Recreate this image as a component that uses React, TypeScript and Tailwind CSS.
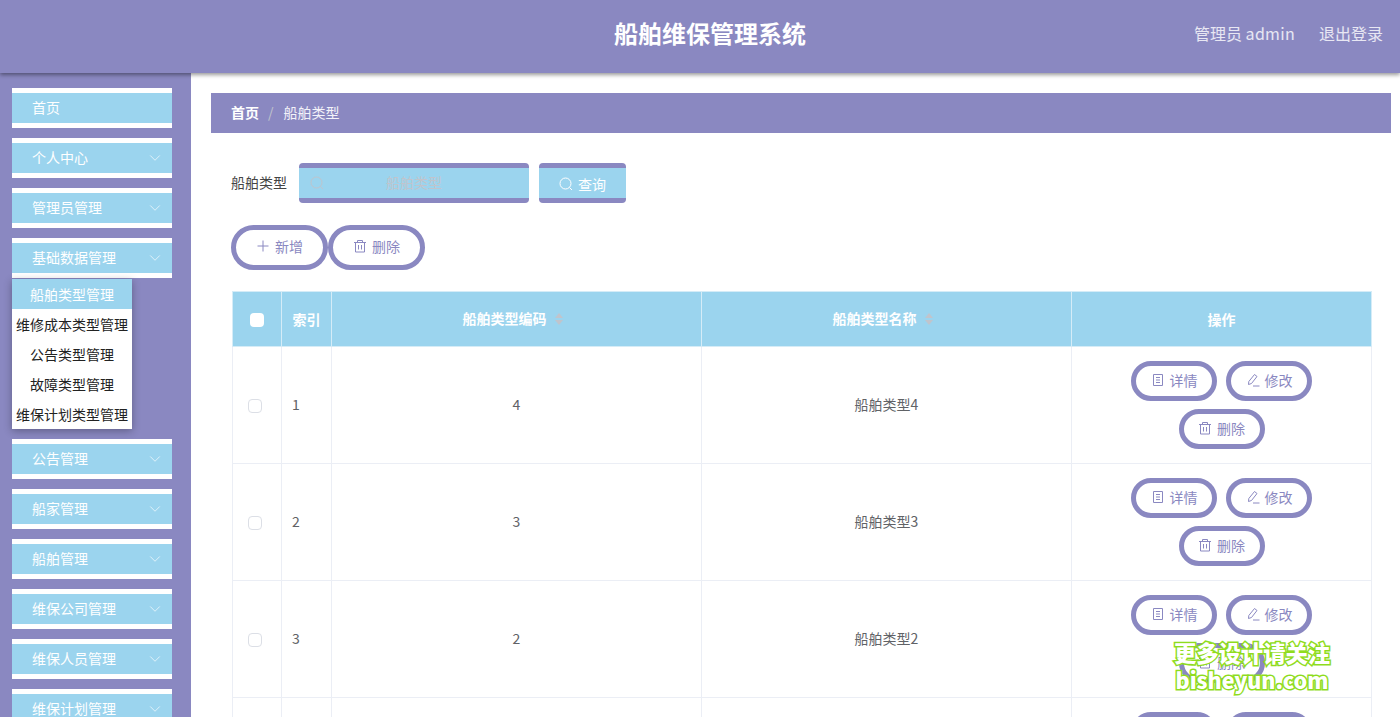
import React from "react";
import { ChevronDown } from "lucide-react";

const menus = ["个人中心", "管理员管理", "基础数据管理"];
const menusAfter = ["公告管理", "船家管理", "船舶管理", "维保公司管理", "维保人员管理", "维保计划管理", "维保记录管理"];
const subMenus = ["船舶类型管理", "维修成本类型管理", "公告类型管理", "故障类型管理", "维保计划类型管理"];
const rows = [
  { index: 1, code: "4", name: "船舶类型4" },
  { index: 2, code: "3", name: "船舶类型3" },
  { index: 3, code: "2", name: "船舶类型2" },
  { index: 4, code: "1", name: "船舶类型1" },
];

function SearchIcon({ className }: { className?: string }) {
  return (
    <svg width="14" height="14" viewBox="0 0 14 14" fill="none" stroke="currentColor" strokeWidth="1" className={className}>
      <circle cx="6.500" cy="6.500" r="5.500" />
      <path d="M10.500 10.500l2.500 2.500" />
    </svg>
  );
}

function PlusIcon() {
  return (
    <svg width="14" height="14" viewBox="0 0 14 14" fill="none" stroke="currentColor" strokeWidth="1">
      <path d="M7 1.500v11M1.500 7h11" />
    </svg>
  );
}

function TrashIcon() {
  return (
    <svg width="14" height="14" viewBox="0 0 14 14" fill="none" stroke="currentColor" strokeWidth="1">
      <path d="M1 3.500h12M4.500 3.500V1.500h5v2M2.500 3.500v9.500h9V3.500M5.500 6v4.500M8.500 6v4.500" />
    </svg>
  );
}

function TicketIcon() {
  return (
    <svg width="14" height="14" viewBox="0 0 14 14" fill="none" stroke="currentColor" strokeWidth="1">
      <path d="M2.500 1.500h9v11h-9zM5 4.500h4M5 7h4M5 9.500h4" />
    </svg>
  );
}

function EditIcon() {
  return (
    <svg width="14" height="14" viewBox="0 0 14 14" fill="none" stroke="currentColor" strokeWidth="1">
      <path d="M8.500 1.500l2.500 2-5.500 7-3 1 .3-3zM7 13h6.500" />
    </svg>
  );
}

function SortCaret() {
  return (
    <svg width="8" height="12" viewBox="0 0 8 12" fill="#c0c4cc" className="relative -top-[2px] ml-2 inline-block">
      <path d="M4 0l4 5H0zM4 12L0 7h8z" />
    </svg>
  );
}

function MenuItem({ label, arrow = true }: { label: string; arrow?: boolean }) {
  return (
    <div className="mb-[10px] flex h-10 w-40 items-center justify-between border-y-[5px] border-white bg-[#9bd4ee] pl-5 pr-[8px] text-sm text-white">
      <span className="pb-[2px]">{label}</span>
      {arrow && <ChevronDown size={18} strokeWidth={0.9} className="text-white" />}
    </div>
  );
}

function ActionButton({ icon, label }: { icon: React.ReactNode; label: string }) {
  return (
    <button className="flex h-10 w-[86px] items-center justify-center gap-[5px] rounded-full border-[5px] border-[#8a88c1] bg-white pb-[2px] text-sm text-[#8a88c1]">
      {icon}
      {label}
    </button>
  );
}

export default function App() {
  return (
    <div className="relative flex h-screen flex-col overflow-hidden bg-white font-['Noto_Sans_CJK_SC','Noto_Sans',sans-serif]">
      {/* 顶部 */}
      <header className="z-10 flex h-[73px] shrink-0 items-center bg-[#8a88c1] pr-[17px] shadow-[0_2px_4px_rgba(0,0,0,0.4)]">
        <h1 className="mb-2 ml-[614px] text-2xl font-bold text-white">船舶维保管理系统</h1>
        <div className="mb-[7px] ml-auto flex gap-6 text-base text-white/80">
          <span>
            管理员 <span className="tracking-[0.3px]">admin</span>
          </span>
          <span>退出登录</span>
        </div>
      </header>

      <div className="flex min-h-0 flex-1">
        {/* 侧边栏 */}
        <aside className="w-[191px] shrink-0 bg-[#8a88c1] pl-3 pt-[15px]">
          <MenuItem label="首页" arrow={false} />
          {menus.map((m) => (
            <MenuItem key={m} label={m} />
          ))}
          <div className="-mt-[9px] mb-[10px] w-[120px] bg-white shadow-[0_2px_8px_rgba(0,0,0,0.3)]">
            {subMenus.map((s, i) => (
              <div
                key={s}
                className={
                  i === 0
                    ? "flex h-[30px] items-center justify-center bg-[#9bd4ee] text-sm whitespace-nowrap text-white"
                    : "flex h-[30px] items-center justify-center text-sm whitespace-nowrap text-[#222]"
                }
              >
                {s}
              </div>
            ))}
          </div>
          {menusAfter.map((m) => (
            <MenuItem key={m} label={m} />
          ))}
        </aside>

        {/* 主内容 */}
        <main className="flex-1 pl-5 pr-[9px] pt-5">
          <div className="flex h-10 items-center bg-[#8a88c1] pb-[2px] pl-5 text-sm text-white/90">
            <span className="font-bold text-white">首页</span>
            <span className="ml-[9px] mr-[10px] text-[#c0c4cc]">/</span>
            <span>船舶类型</span>
          </div>

          <div className="mt-[30px] flex h-10 items-center pl-5">
            <span className="pb-[2px] text-sm text-[#444]">船舶类型</span>
            <div className="relative ml-3 h-10 w-[230px]">
              <SearchIcon className="absolute left-[11px] top-[13px] text-[#c0c4cc]" />
              <input
                placeholder="船舶类型"
                className="h-full w-full rounded border-y-[5px] border-[#8a88c1] bg-[#9bd4ee] pb-[2px] text-center text-sm outline-none placeholder:text-[#c0c4cc]"
              />
            </div>
            <button className="ml-[10px] flex h-10 w-[87px] items-center justify-center gap-[5px] rounded border-y-[5px] border-[#8a88c1] bg-[#9bd4ee] pt-[2px] text-sm text-white">
              <SearchIcon />
              查询
            </button>
          </div>

          <div className="mt-[22px] flex pl-5">
            <button className="flex h-[45px] w-[97px] items-center justify-center gap-[5px] rounded-full border-[5px] border-[#8a88c1] bg-white pb-[3px] text-sm text-[#8a88c1]">
              <PlusIcon />
              新增
            </button>
            <button className="flex h-[45px] w-[97px] items-center justify-center gap-[5px] rounded-full border-[5px] border-[#8a88c1] bg-white pb-[3px] text-sm text-[#8a88c1]">
              <TrashIcon />
              删除
            </button>
          </div>

          <table className="ml-[21px] mt-[21px] w-[1139px] table-fixed border-collapse text-sm text-[#606266]">
            <colgroup>
              <col className="w-[49px]" />
              <col className="w-[50px]" />
              <col className="w-[370px]" />
              <col className="w-[370px]" />
              <col className="w-[300px]" />
            </colgroup>
            <thead>
              <tr className="h-[55px] bg-[#9bd4ee] font-bold text-white">
                <th className="border border-[#d5ecf7]">
                  <div className="ml-[17px] mt-[2px] h-[14px] w-[14px] rounded-sm bg-white" />
                </th>
                <th className="border border-[#d5ecf7]">索引</th>
                <th className="border border-[#d5ecf7] pr-2">
                  <span className="relative -top-px">船舶类型编码</span>
                  <SortCaret />
                </th>
                <th className="border border-[#d5ecf7] pr-2">
                  <span className="relative -top-px">船舶类型名称</span>
                  <SortCaret />
                </th>
                <th className="border border-[#d5ecf7]">操作</th>
              </tr>
            </thead>
            <tbody>
              {rows.map((row) => (
                <tr key={row.index} className="h-[117px]">
                  <td className="border border-[#ebeef5]">
                    <div className="ml-[15px] mt-[2px] h-[14px] w-[14px] rounded-sm border border-[#dcdfe6] bg-white" />
                  </td>
                  <td className="border border-[#ebeef5] pb-[2px] pl-[10px]">{row.index}</td>
                  <td className="border border-[#ebeef5] pb-[2px] text-center">{row.code}</td>
                  <td className="border border-[#ebeef5] pb-[2px] text-center">{row.name}</td>
                  <td className="border border-[#ebeef5]">
                    <div className="flex flex-wrap justify-center gap-x-[9px] gap-y-2 px-10">
                      <ActionButton icon={<TicketIcon />} label="详情" />
                      <ActionButton icon={<EditIcon />} label="修改" />
                      <ActionButton icon={<TrashIcon />} label="删除" />
                    </div>
                  </td>
                </tr>
              ))}
            </tbody>
          </table>
        </main>
      </div>

      {/* 水印 */}
      <div className="absolute left-[1173px] top-[639px] z-20 w-[158px] text-center font-black leading-[27px] text-white [paint-order:stroke] [-webkit-text-stroke:3px_#8fdc1e]">
        <div className="text-[22.300px]">更多设计请关注</div>
        <div className="text-[21.500px]">bisheyun.com</div>
      </div>
    </div>
  );
}
